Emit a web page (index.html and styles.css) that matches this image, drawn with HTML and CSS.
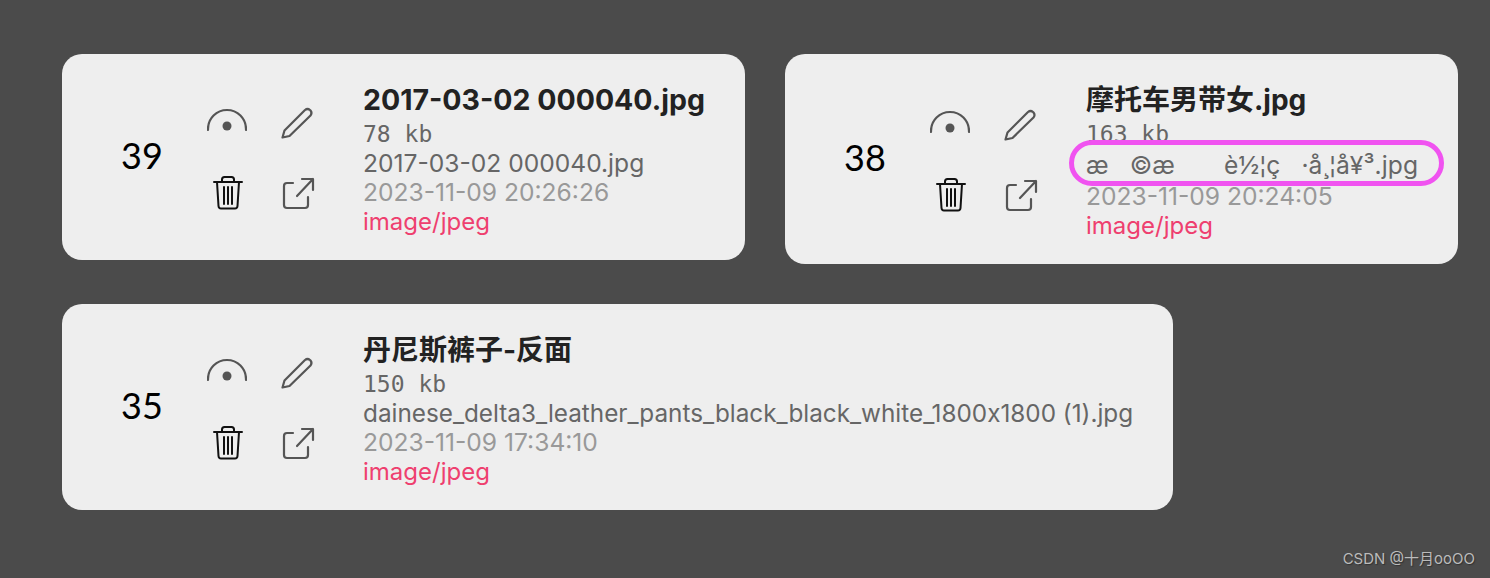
FILE: index.html
```html
<!DOCTYPE html>
<html lang="zh">
<head>
    <meta charset="UTF-8">
    <title>Files</title>
    <link rel="stylesheet" href="styles.css">
</head>
<body>
    <svg class="defs" width="0" height="0">
        <symbol id="i-eye" viewBox="0 0 40 40">
            <path class="line" d="M1 27V26A19 19 0 0 1 39 26V27"/>
            <circle class="fill" cx="20" cy="23" r="4.5"/>
        </symbol>
        <symbol id="i-pen" viewBox="0 0 40 40">
            <path class="line" d="M5.5 34.5L7.5 27.5L28 7Q30.5 5 33 7L33.5 7.5Q35.5 10 33.5 12.5L12.5 33Z"/>
        </symbol>
        <symbol id="i-trash" viewBox="0 0 40 40">
            <path class="line dark" d="M7 9H35M10 9L11.5 33Q11.7 35.5 14 35.5H28Q30.3 35.5 30.5 33L32 9M15 9V6.5Q15 4 17.5 4H24.5Q27 4 27 6.5V9M17 14V31M21 14V31M25 14V31"/>
        </symbol>
        <symbol id="i-share" viewBox="0 0 40 40">
            <path class="line" d="M16 10H10Q7 10 7 13V32Q7 35 10 35H28Q31 35 31 32V24M20 23L36 6M25 6H36V17"/>
        </symbol>
    </svg>

    <div class="list">
        <div class="card">
            <div class="num">39</div>
            <div class="actions">
                <svg class="icon"><use href="#i-eye"/></svg>
                <svg class="icon"><use href="#i-pen"/></svg>
                <svg class="icon"><use href="#i-trash"/></svg>
                <svg class="icon"><use href="#i-share"/></svg>
            </div>
            <div class="info">
                <div class="title">2017-03-02 000040.jpg</div>
                <div class="size">78 kb</div>
                <div class="name">2017-03-02 000040.jpg</div>
                <div class="time">2023-11-09 20:26:26</div>
                <div class="mime">image/jpeg</div>
            </div>
        </div>

        <div class="card">
            <div class="num">38</div>
            <div class="actions">
                <svg class="icon"><use href="#i-eye"/></svg>
                <svg class="icon"><use href="#i-pen"/></svg>
                <svg class="icon"><use href="#i-trash"/></svg>
                <svg class="icon"><use href="#i-share"/></svg>
            </div>
            <div class="info">
                <div class="title cjk">摩托车男带女.jpg</div>
                <div class="size">163 kb</div>
                <div class="name garbled">æ   ©æ       è½¦ç   ·å¸¦å¥³.jpg</div>
                <div class="time">2023-11-09 20:24:05</div>
                <div class="mime">image/jpeg</div>
            </div>
            <div class="mark"></div>
        </div>

        <div class="card">
            <div class="num">35</div>
            <div class="actions">
                <svg class="icon"><use href="#i-eye"/></svg>
                <svg class="icon"><use href="#i-pen"/></svg>
                <svg class="icon"><use href="#i-trash"/></svg>
                <svg class="icon"><use href="#i-share"/></svg>
            </div>
            <div class="info">
                <div class="title cjk">丹尼斯裤子-反面</div>
                <div class="size">150 kb</div>
                <div class="name long">dainese_delta3_leather_pants_black_black_white_1800x1800 (1).jpg</div>
                <div class="time">2023-11-09 17:34:10</div>
                <div class="mime">image/jpeg</div>
            </div>
        </div>
    </div>

    <div class="watermark">CSDN @十月ooOO</div>
</body>
</html>
```

FILE: styles.css
```css
html, body {
    margin: 0;
    height: 578px;
    overflow: hidden;
}
body {
    position: relative;
    background-color: #4b4b4b;
    font-family: Inter, "Noto Sans CJK SC", sans-serif;
}
.defs {
    position: absolute;
}
.list {
    display: flex;
    flex-wrap: wrap;
    align-items: flex-start;
    gap: 40px;
    padding: 54px 20px 0 62px;
}
.card {
    position: relative;
    display: flex;
    align-items: center;
    padding: 26px 40px 24px 40px;
    background-color: #eee;
    border-radius: 20px;
}
.num {
    width: 80px;
    padding-bottom: 6px;
    text-align: center;
    font-family: Lato, sans-serif;
    font-size: 36px;
    color: #000;
}
.actions {
    display: grid;
    grid-template-columns: 70px 70px;
    grid-auto-rows: 70px;
    margin: 0 31px 0 10px;
}
.icon {
    width: 40px;
    height: 40px;
    margin: 15px;
}
.line {
    fill: none;
    stroke: #555;
    stroke-width: 2.2;
    stroke-linecap: round;
    stroke-linejoin: round;
}
.line.dark {
    stroke: #111;
    stroke-width: 2;
}
.fill {
    fill: #555;
}
.info {
    font-size: 24.6px;
    line-height: 29px;
}
.info div {
    height: 29px;
    white-space: pre;
}
.info .title {
    height: 40px;
    font-size: 28.5px;
    font-weight: 700;
    line-height: 40px;
    color: #222;
}
.info .title.cjk {
    font-size: 28px;
}
.size {
    font-family: "DejaVu Sans Mono", monospace;
    font-size: 23px;
    color: #666;
}
.name {
    color: #666;
}
.info .garbled {
    position: relative;
    z-index: 1;
    height: 33px;
    line-height: 33px;
    letter-spacing: 0.1px;
}
.long {
    font-size: 24.3px;
    font-feature-settings: "calt" 0;
}
.time {
    color: #999;
}
.mime {
    font-size: 24px;
    color: #ee3f6f;
}
.mark {
    position: absolute;
    left: 284px;
    top: 86px;
    width: 365px;
    height: 36px;
    border: 5px solid #f053f0;
    border-radius: 23px;
    background-color: #eee;
}
.watermark {
    position: absolute;
    right: 15px;
    bottom: 10px;
    font-size: 15px;
    color: #bbb;
    text-shadow: 1px 1px 1px #333;
}
```
